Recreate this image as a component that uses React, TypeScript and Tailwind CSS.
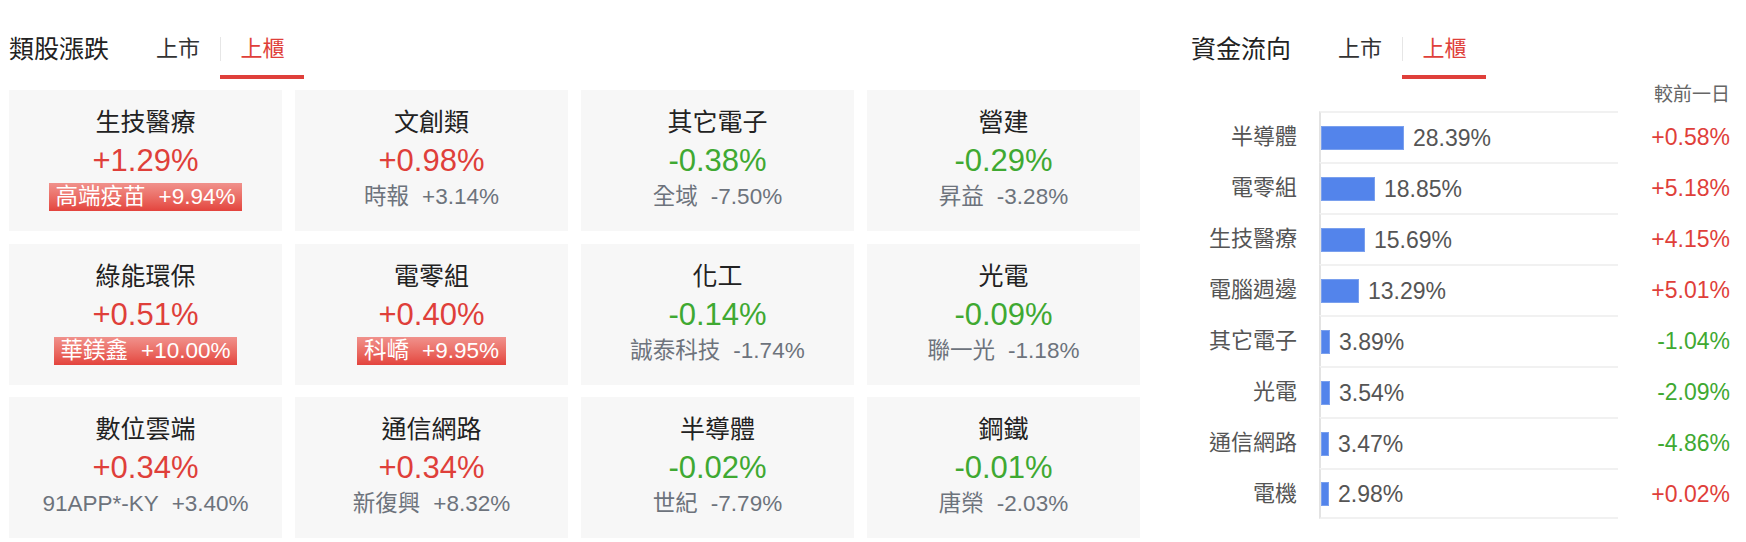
import clsx from 'clsx'

type Sector = {
  name: string
  change: number
  stock: string
  stockChange: number
  limit?: boolean
}

const sectors: Sector[] = [
  { name: '生技醫療', change: 1.29, stock: '高端疫苗', stockChange: 9.94, limit: true },
  { name: '文創類', change: 0.98, stock: '時報', stockChange: 3.14 },
  { name: '其它電子', change: -0.38, stock: '全域', stockChange: -7.5 },
  { name: '營建', change: -0.29, stock: '昇益', stockChange: -3.28 },
  { name: '綠能環保', change: 0.51, stock: '華鎂鑫', stockChange: 10.0, limit: true },
  { name: '電零組', change: 0.4, stock: '科嶠', stockChange: 9.95, limit: true },
  { name: '化工', change: -0.14, stock: '誠泰科技', stockChange: -1.74 },
  { name: '光電', change: -0.09, stock: '聯一光', stockChange: -1.18 },
  { name: '數位雲端', change: 0.34, stock: '91APP*-KY', stockChange: 3.4 },
  { name: '通信網路', change: 0.34, stock: '新復興', stockChange: 8.32 },
  { name: '半導體', change: -0.02, stock: '世紀', stockChange: -7.79 },
  { name: '鋼鐵', change: -0.01, stock: '唐榮', stockChange: -2.03 },
]

type Flow = { name: string; share: string; bar: number; diff: number }

const flows: Flow[] = [
  { name: '半導體', share: '28.39%', bar: 83, diff: 0.58 },
  { name: '電零組', share: '18.85%', bar: 54, diff: 5.18 },
  { name: '生技醫療', share: '15.69%', bar: 44, diff: 4.15 },
  { name: '電腦週邊', share: '13.29%', bar: 38, diff: 5.01 },
  { name: '其它電子', share: '3.89%', bar: 9, diff: -1.04 },
  { name: '光電', share: '3.54%', bar: 9, diff: -2.09 },
  { name: '通信網路', share: '3.47%', bar: 8, diff: -4.86 },
  { name: '電機', share: '2.98%', bar: 8, diff: 0.02 },
]

const pct = (v: number) => `${v >= 0 ? '+' : ''}${v.toFixed(2)}%`

const App: React.FC = () => {
  return (
    <div className="flex h-[542px] w-[1746px] bg-white font-['Liberation_Sans','Noto_Sans_CJK_TC',sans-serif] text-[#222]">
      <div className="w-[1140px] pl-[9px]">
        <Header title="類股漲跌" />
        <div className="mt-[11px] grid grid-cols-[repeat(4,273px)] grid-rows-[repeat(3,141px)] gap-x-[13px] gap-y-[12.5px]">
          {sectors.map((s) => (
            <SectorCard key={s.name} sector={s} />
          ))}
        </div>
      </div>

      <div className="ml-[51px] w-[539px]">
        <Header title="資金流向" />
        <div className="h-8 text-right text-[19px] leading-8 text-[#666]">較前一日</div>
        <FlowChart />
      </div>
    </div>
  )
}

// ---

const Header: React.FC<{ title: string }> = ({ title }) => {
  return (
    <div className="flex h-[79px]">
      <h2 className="w-[127px] pt-[37px] text-[25px] leading-6 font-normal">{title}</h2>
      <Tab label="上市" />
      <Tab label="上櫃" active divider />
    </div>
  )
}

const Tab: React.FC<{ label: string; active?: boolean; divider?: boolean }> = ({ label, active, divider }) => {
  return (
    <div
      className={clsx(
        'h-full w-[84px] border-b-4 pt-[37px]',
        active ? 'border-[#df3f3a] text-[#df3f3a]' : 'border-transparent text-[#333]',
      )}
    >
      <div className={clsx('h-6 text-center text-[22px] leading-6', divider && 'border-l border-[#e6e6e6]')}>
        {label}
      </div>
    </div>
  )
}

const SectorCard: React.FC<{ sector: Sector }> = ({ sector }) => {
  const up = sector.change >= 0
  return (
    <div className="flex flex-col items-center bg-[#f7f7f7] pt-4">
      <div className="h-8 text-[25px] leading-8 text-[#222]">{sector.name}</div>
      <div className={clsx('mt-[5px] h-9 text-[31px] leading-9', up ? 'text-[#df3f3a]' : 'text-[#3fa932]')}>
        {pct(sector.change)}
      </div>
      {sector.limit ? (
        <div className="mt-1 flex h-7 items-center bg-linear-to-b from-[#f0918c] to-[#e3433d] px-[7px] text-[22.5px] leading-7 text-white">
          <span>{sector.stock}</span>
          <span className="ml-[13px]">{pct(sector.stockChange)}</span>
        </div>
      ) : (
        <div className="mt-1 flex h-7 items-center text-[22.5px] leading-7 text-[#6d737c]">
          <span>{sector.stock}</span>
          <span className="ml-[13px]">{pct(sector.stockChange)}</span>
        </div>
      )}
    </div>
  )
}

const FlowChart: React.FC = () => {
  return (
    <div className="flex flex-col">
      {flows.map((f, i) => (
        <div key={f.name} className="flex h-[51px] items-center">
          <div className="mr-[22px] w-[106px] text-right text-[22px] leading-7 text-[#555]">{f.name}</div>
          <div
            className={clsx(
              'flex h-full w-[299px] items-center border-t-2 border-l-2 border-t-[#f1f1f1] border-l-[#e3e3e3]',
              i === flows.length - 1 && 'border-b-2 border-b-[#f1f1f1]',
            )}
          >
            <div className="h-6 border border-[#7aa0ee] bg-[#5384eb]" style={{ width: f.bar }} />
            <span className="ml-[9px] text-[23px] leading-7 text-[#555]">{f.share}</span>
          </div>
          <div className={clsx('flex-1 text-right text-[23px] leading-7', f.diff >= 0 ? 'text-[#df3f3a]' : 'text-[#3fa932]')}>
            {pct(f.diff)}
          </div>
        </div>
      ))}
    </div>
  )
}

export default App
